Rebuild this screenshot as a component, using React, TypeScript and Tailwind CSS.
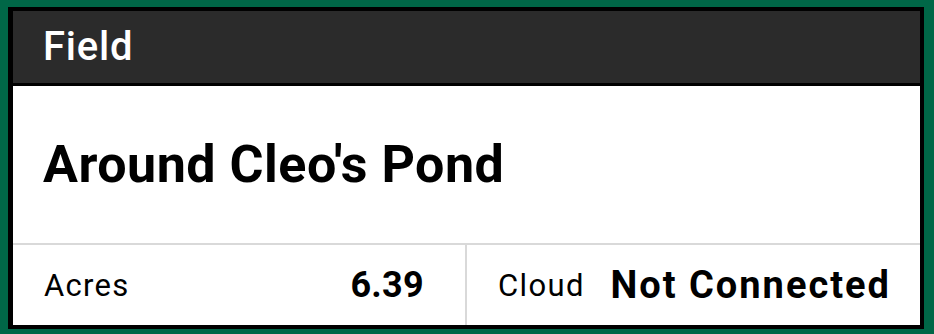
import React from "react";

export default function App() {
  return (
    <div
      className="w-[934px] h-[334px] bg-[#006747] pt-[7px] pl-[8px] pr-[10px] pb-[5px]"
      style={{ fontFamily: "Roboto, 'Liberation Sans', sans-serif" }}
    >
      <div className="h-full flex flex-col border-[4px] border-l-[5px] border-black bg-white">
        <div className="h-[75px] shrink-0 bg-[#2b2b2b] border-b-[3px] border-black flex items-center pl-[30px]">
          <span className="text-white text-[40px] font-medium leading-none tracking-[0.8px]">Field</span>
        </div>
        <div className="flex-1 flex items-center pl-[30px] border-b-[2px] border-[#d9d9d9]">
          <span className="text-black text-[52px] font-bold leading-none tracking-[0.5px]">Around Cleo's Pond</span>
        </div>
        <div className="h-[80px] shrink-0 flex">
          <div className="w-[454px] flex items-center justify-between pl-[31px] pr-[41px] border-r-[2px] border-[#d9d9d9]">
            <span className="text-[31px] text-black leading-none tracking-[1.3px]">Acres</span>
            <span className="text-[36px] font-bold text-black leading-none tracking-[0.3px]">6.39</span>
          </div>
          <div className="flex-1 flex items-center justify-between pl-[31px] pr-[29px]">
            <span className="text-[31px] text-black leading-none tracking-[1.4px]">Cloud</span>
            <span className="text-[38px] font-bold text-black leading-none tracking-[2px]">Not Connected</span>
          </div>
        </div>
      </div>
    </div>
  );
}
